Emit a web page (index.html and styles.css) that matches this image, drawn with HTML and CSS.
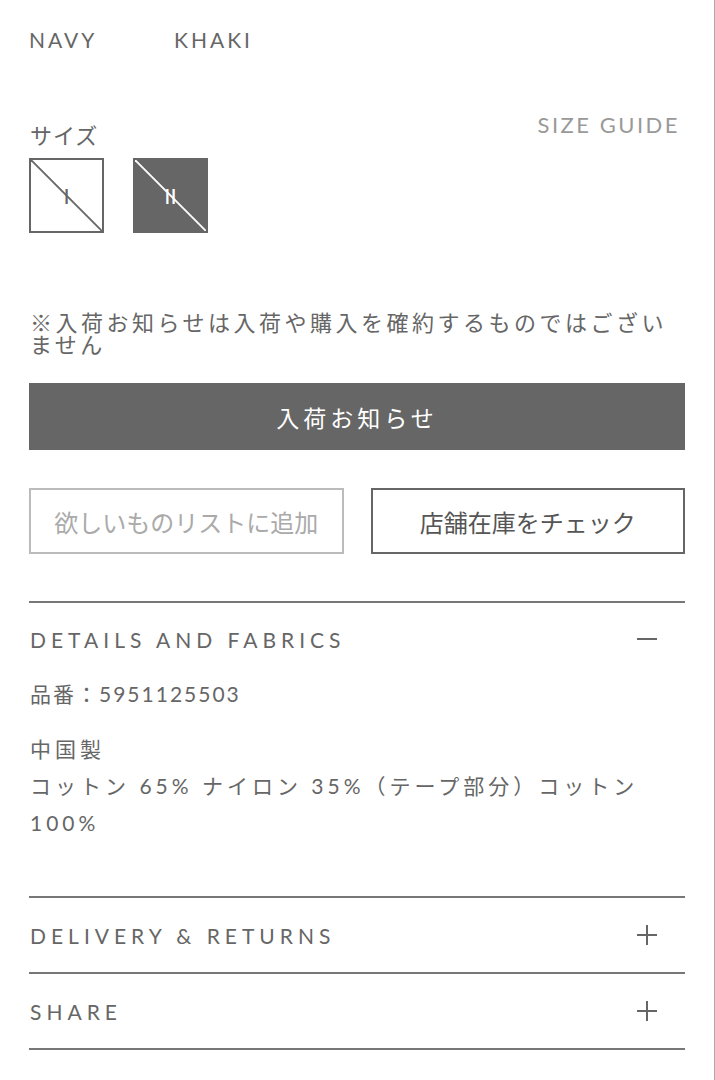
FILE: index.html
```html
<!DOCTYPE html>
<html lang="ja">
<head>
<meta charset="utf-8">
<link rel="stylesheet" href="styles.css">
</head>
<body>
<div class="page">
  <div class="colors">
    <span class="color">NAVY</span>
    <span class="color">KHAKI</span>
  </div>

  <div class="size-head">
    <span class="size-label">サイズ</span>
    <span class="size-guide">SIZE GUIDE</span>
  </div>
  <div class="sizes">
    <div class="size-box">
      <svg class="slash" viewBox="0 0 75 75" preserveAspectRatio="none"><line x1="0" y1="0" x2="75" y2="75"/></svg>
      <span class="size-text">I</span>
    </div>
    <div class="size-box selected">
      <svg class="slash" viewBox="0 0 75 75" preserveAspectRatio="none"><line x1="0" y1="0" x2="75" y2="75"/></svg>
      <span class="size-text">II</span>
    </div>
  </div>

  <p class="note">※入荷お知らせは入荷や購入を確約するものではございません</p>
  <div class="btn-primary">入荷お知らせ</div>
  <div class="btn-row">
    <div class="btn-outline disabled">欲しいものリストに追加</div>
    <div class="btn-outline">店舗在庫をチェック</div>
  </div>

  <div class="accordion">
    <div class="acc-item open">
      <div class="acc-head">
        <span class="acc-title">DETAILS AND FABRICS</span>
        <span class="icon minus"></span>
      </div>
      <div class="acc-body">
        <p class="code">品番：5951125503</p>
        <p class="fabric">中国製<br>コットン 65% ナイロン 35%（テープ部分）コットン 100%</p>
      </div>
    </div>
    <div class="acc-item">
      <div class="acc-head">
        <span class="acc-title">DELIVERY &amp; RETURNS</span>
        <span class="icon plus"></span>
      </div>
    </div>
    <div class="acc-item">
      <div class="acc-head">
        <span class="acc-title">SHARE</span>
        <span class="icon plus"></span>
      </div>
    </div>
  </div>
</div>
</body>
</html>
```
FILE: styles.css
```css
html, body {
  margin: 0;
  padding: 0;
  background: #fff;
}
body {
  font-family: "Lato", "Noto Sans CJK JP", sans-serif;
  color: #666;
}
.page {
  box-sizing: border-box;
  width: 715px;
  min-height: 1080px;
  border-right: 1px solid #aaa;
  padding: 25px 29px 0 29px;
}
.colors {
  display: flex;
  height: 28px;
  align-items: center;
}
.color {
  font-size: 21px;
  letter-spacing: 3px;
  width: 145px;
}
.size-head {
  margin-top: 64px;
  display: flex;
  justify-content: space-between;
  align-items: flex-start;
  height: 41px;
}
.size-label {
  font-family: "Noto Sans CJK JP", sans-serif;
  font-size: 22px;
  line-height: 34px;
  letter-spacing: 1px;
  padding-left: 1px;
}
.size-guide {
  font-size: 22px;
  letter-spacing: 2.5px;
  color: #999;
  line-height: 24px;
  margin-right: 5px;
  margin-top: -4px;
}
.sizes {
  display: flex;
  gap: 29px;
}
.size-box {
  position: relative;
  box-sizing: border-box;
  width: 75px;
  height: 75px;
  border: 2px solid #666;
  display: flex;
  align-items: center;
  justify-content: center;
  color: #666;
}
.size-box.selected {
  background: #666;
  border-color: #666;
  color: #fff;
}
.slash {
  position: absolute;
  left: 0;
  top: 0;
  width: 100%;
  height: 100%;
}
.slash line {
  stroke: #666;
  stroke-width: 2;
}
.selected .slash line {
  stroke: #fff;
}
.size-text {
  font-size: 22px;
  line-height: 1;
  letter-spacing: 0;
}
.note {
  margin: 77px 0 0 0;
  font-family: "Noto Sans CJK JP", sans-serif;
  font-size: 22px;
  line-height: 22px;
  letter-spacing: 3.5px;
  padding-left: 1px;
  padding-right: 12px;
}
.btn-primary {
  margin-top: 29px;
  height: 67px;
  background: #666;
  color: #fff;
  font-family: "Noto Sans CJK JP", sans-serif;
  font-size: 23px;
  letter-spacing: 4px;
  display: flex;
  align-items: center;
  justify-content: center;
}
.btn-row {
  margin-top: 38px;
  display: flex;
  gap: 27px;
}
.btn-outline {
  box-sizing: border-box;
  flex: 1;
  height: 66px;
  border: 2px solid #666;
  font-family: "Noto Sans CJK JP", sans-serif;
  font-size: 24px;
  color: #555;
  display: flex;
  align-items: center;
  justify-content: center;
}
.btn-outline.disabled {
  border-color: #bbb;
  color: #aaa;
}
.accordion {
  margin-top: 47px;
  border-top: 2px solid #777;
}
.acc-item {
  border-bottom: 2px solid #777;
}
.acc-head {
  height: 74px;
  display: flex;
  align-items: center;
  justify-content: space-between;
}
.acc-title {
  font-size: 21px;
  letter-spacing: 5px;
  padding-left: 1px;
}
.icon {
  position: relative;
  width: 20px;
  height: 20px;
  margin-right: 28px;
}
.icon::before,
.icon::after {
  content: "";
  position: absolute;
  background: #666;
}
.icon::before {
  left: 0;
  top: 9px;
  width: 20px;
  height: 2px;
}
.plus::after {
  left: 9px;
  top: 0;
  width: 2px;
  height: 20px;
}
.open .acc-head {
  height: 72px;
}
.acc-body {
  padding: 0 0 55px 1px;
  font-family: "Lato", "Noto Sans CJK JP", sans-serif;
  font-size: 21px;
}
.acc-body p {
  margin: 0;
  line-height: 37px;
}
.acc-body .code {
  margin-bottom: 18px;
  letter-spacing: 2px;
}
.acc-body .fabric {
  letter-spacing: 4px;
}
```
